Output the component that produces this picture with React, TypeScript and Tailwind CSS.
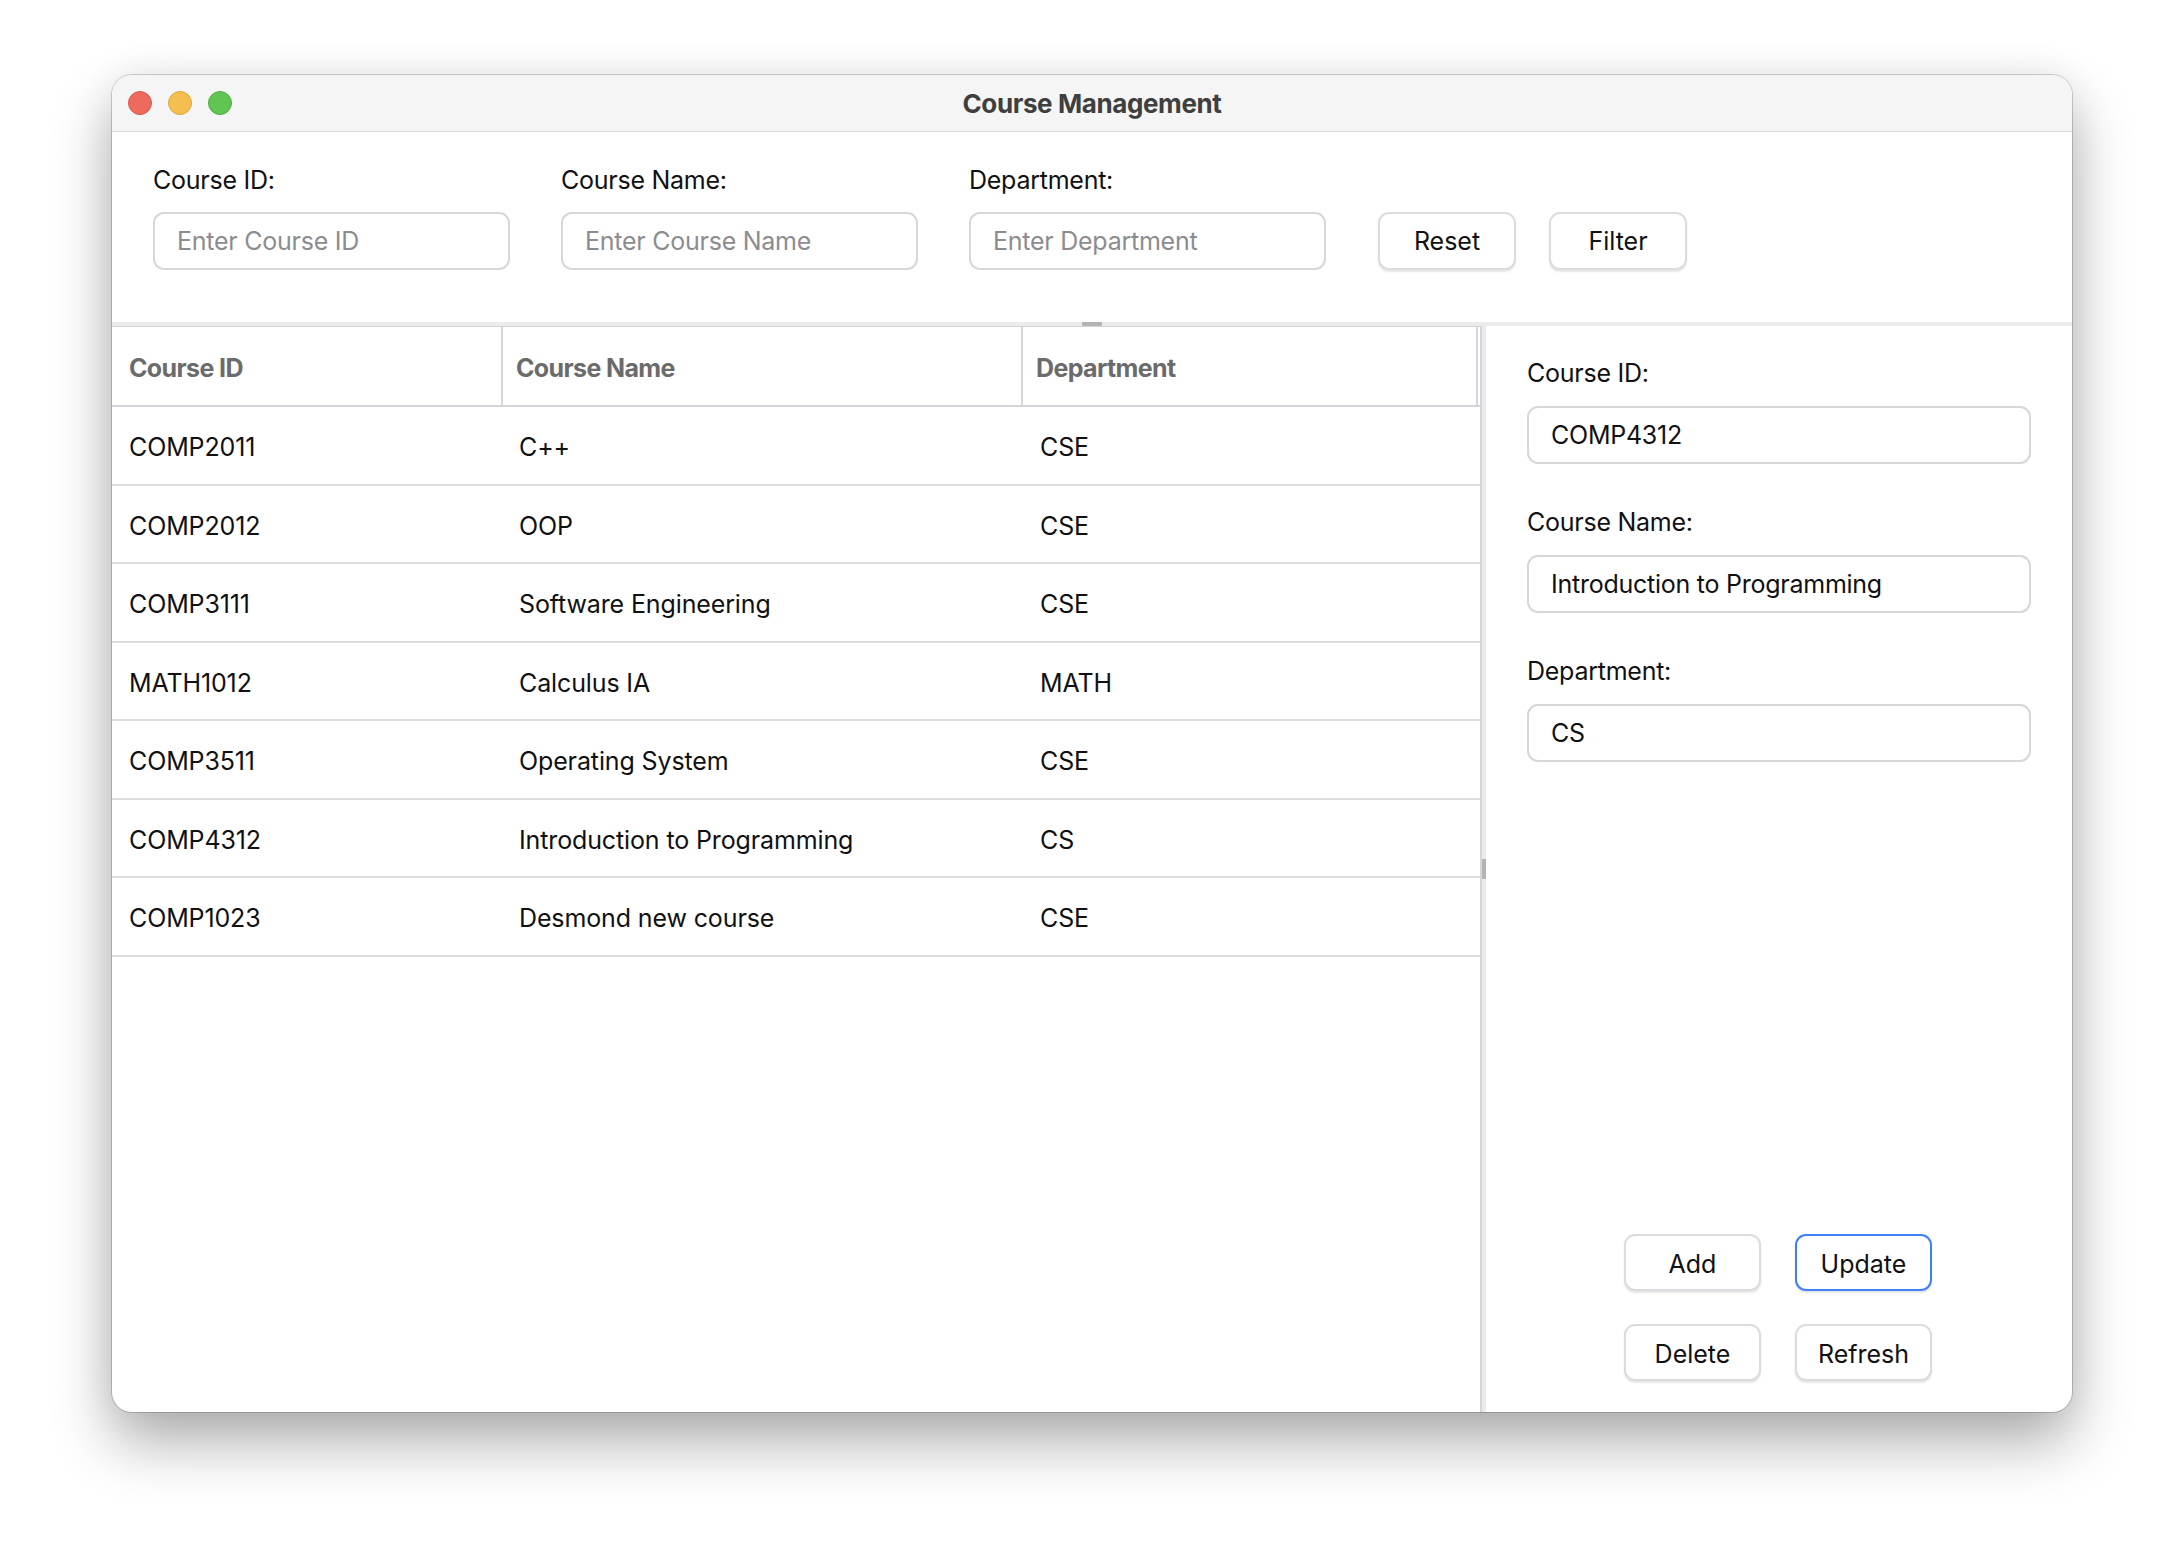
const courses = [
  { id: 'COMP2011', name: 'C++', dept: 'CSE' },
  { id: 'COMP2012', name: 'OOP', dept: 'CSE' },
  { id: 'COMP3111', name: 'Software Engineering', dept: 'CSE' },
  { id: 'MATH1012', name: 'Calculus IA', dept: 'MATH' },
  { id: 'COMP3511', name: 'Operating System', dept: 'CSE' },
  { id: 'COMP4312', name: 'Introduction to Programming', dept: 'CS' },
  { id: 'COMP1023', name: 'Desmond new course', dept: 'CSE' },
]

const filters = [
  { label: 'Course ID:', placeholder: 'Enter Course ID' },
  { label: 'Course Name:', placeholder: 'Enter Course Name' },
  { label: 'Department:', placeholder: 'Enter Department' },
]

const details = [
  { label: 'Course ID:', value: 'COMP4312' },
  { label: 'Course Name:', value: 'Introduction to Programming' },
  { label: 'Department:', value: 'CS' },
]

function Button({ label, focused = false }: { label: string; focused?: boolean }) {
  return (
    <button
      className={`w-[137px] h-[57px] pt-[2px] rounded-[11px] bg-white border-2 text-[25px] leading-[30px] text-[#111] shadow-[0_2px_2px_rgba(0,0,0,0.10)] ${
        focused ? 'border-[#3c82f6]' : 'border-[#dcdce0]'
      }`}
    >
      {label}
    </button>
  )
}

export default function App() {
  return (
    <div
      className="w-[2184px] h-[1560px] bg-white pl-[112px] pt-[75px]"
      style={{ fontFamily: 'Inter, "Noto Sans", sans-serif' }}
    >
      <div className="w-[1960px] h-[1337px] flex flex-col rounded-[20px] overflow-hidden bg-white shadow-[0_0_0_1px_rgba(0,0,0,0.18),0_30px_60px_rgba(0,0,0,0.32),0_0_40px_rgba(0,0,0,0.06)]">
        {/* Title bar */}
        <div className="h-[57px] shrink-0 grid grid-cols-[1fr_auto_1fr] items-center bg-[#f5f5f5] border-b border-[#d8d8d8] px-[16px]">
          <div className="flex items-center gap-[16px]">
            <span className="w-[24px] h-[24px] rounded-full bg-[#ed6a5e] border border-[#d9574c]" />
            <span className="w-[24px] h-[24px] rounded-full bg-[#f5bf4f] border border-[#dba63b]" />
            <span className="w-[24px] h-[24px] rounded-full bg-[#61c554] border border-[#4ead41]" />
          </div>
          <div className="text-[26px] font-bold text-[#3f3f3f] tracking-[-0.015em]">Course Management</div>
          <div />
        </div>

        {/* Filters */}
        <div className="shrink-0 flex items-end pl-[41px] pt-[33px] pb-[52px]">
          {filters.map((f) => (
            <div key={f.label} className="flex flex-col w-[357px] mr-[51px] gap-[17px]">
              <div className="text-[25px] leading-[30px] text-[#111] tracking-[-0.01em]">{f.label}</div>
              <div className="h-[58px] pt-[2px] rounded-[11px] border-2 border-[#d6d6db] flex items-center px-[22px] text-[25px] text-[#8c8c90] tracking-[-0.01em]">
                {f.placeholder}
              </div>
            </div>
          ))}
          <div className="flex gap-[33px] ml-[1px]">
            <button className="w-[138px] h-[58px] pt-[2px] rounded-[11px] bg-white border-2 border-[#dcdce0] text-[25px] text-[#111] shadow-[0_2px_2px_rgba(0,0,0,0.10)]">
              Reset
            </button>
            <button className="w-[138px] h-[58px] pt-[2px] rounded-[11px] bg-white border-2 border-[#dcdce0] text-[25px] text-[#111] shadow-[0_2px_2px_rgba(0,0,0,0.10)]">
              Filter
            </button>
          </div>
        </div>

        {/* Horizontal split handle */}
        <div className="h-[4px] shrink-0 bg-[#ebebeb] flex justify-center">
          <div className="w-[20px] h-full bg-[#b4b4b4]" />
        </div>

        {/* Main split */}
        <div className="flex-1 flex min-h-0">
          {/* Table */}
          <div className="w-[1368px] shrink-0 flex flex-col">
            <div className="h-[81px] flex border-t border-b-2 border-[#d6d6da] text-[25px] font-bold text-[#6b6b6b] tracking-[-0.025em]">
              <div className="w-[391px] pl-[17px] pt-[5px] flex items-center border-r-2 border-[#d6d6da]">Course ID</div>
              <div className="w-[520px] pl-[13px] pt-[5px] flex items-center border-r-2 border-[#d6d6da]">Course Name</div>
              <div className="w-[455px] pl-[13px] pt-[5px] flex items-center border-r-2 border-[#d6d6da]">Department</div>
            </div>
            {courses.map((c) => (
              <div
                key={c.id}
                className="h-[78.5px] pt-[5px] flex items-center border-b-2 border-[#dcdcdf] text-[25px] text-[#111] tracking-[-0.005em]"
              >
                <div className="w-[391px] pl-[17px]">{c.id}</div>
                <div className="w-[522px] pl-[16px]">{c.name}</div>
                <div className="flex-1 pl-[15px]">{c.dept}</div>
              </div>
            ))}
          </div>

          {/* Vertical split handle */}
          <div className="w-[6px] shrink-0 border-l-2 border-[#d6d6da] bg-[#ebebeb] flex items-center">
            <div className="w-full h-[20px] bg-[#b4b4b4]" />
          </div>

          {/* Detail form */}
          <div className="flex-1 flex flex-col px-[41px] pt-[32px] pb-[31px]">
            {details.map((d, i) => (
              <div key={d.label} className={`flex flex-col gap-[18px] ${i > 0 ? 'mt-[43px]' : ''}`}>
                <div className="text-[25px] leading-[30px] text-[#111] tracking-[-0.01em]">{d.label}</div>
                <div className="h-[58px] pt-[2px] rounded-[11px] border-2 border-[#d6d6db] flex items-center px-[22px] text-[25px] text-[#111] tracking-[-0.01em]">
                  {d.value}
                </div>
              </div>
            ))}
            <div className="mt-auto grid grid-cols-[138px_139px] gap-x-[33px] gap-y-[33px] justify-center">
              <Button label="Add" />
              <Button label="Update" focused />
              <Button label="Delete" />
              <Button label="Refresh" />
            </div>
          </div>
        </div>
      </div>
    </div>
  )
}
